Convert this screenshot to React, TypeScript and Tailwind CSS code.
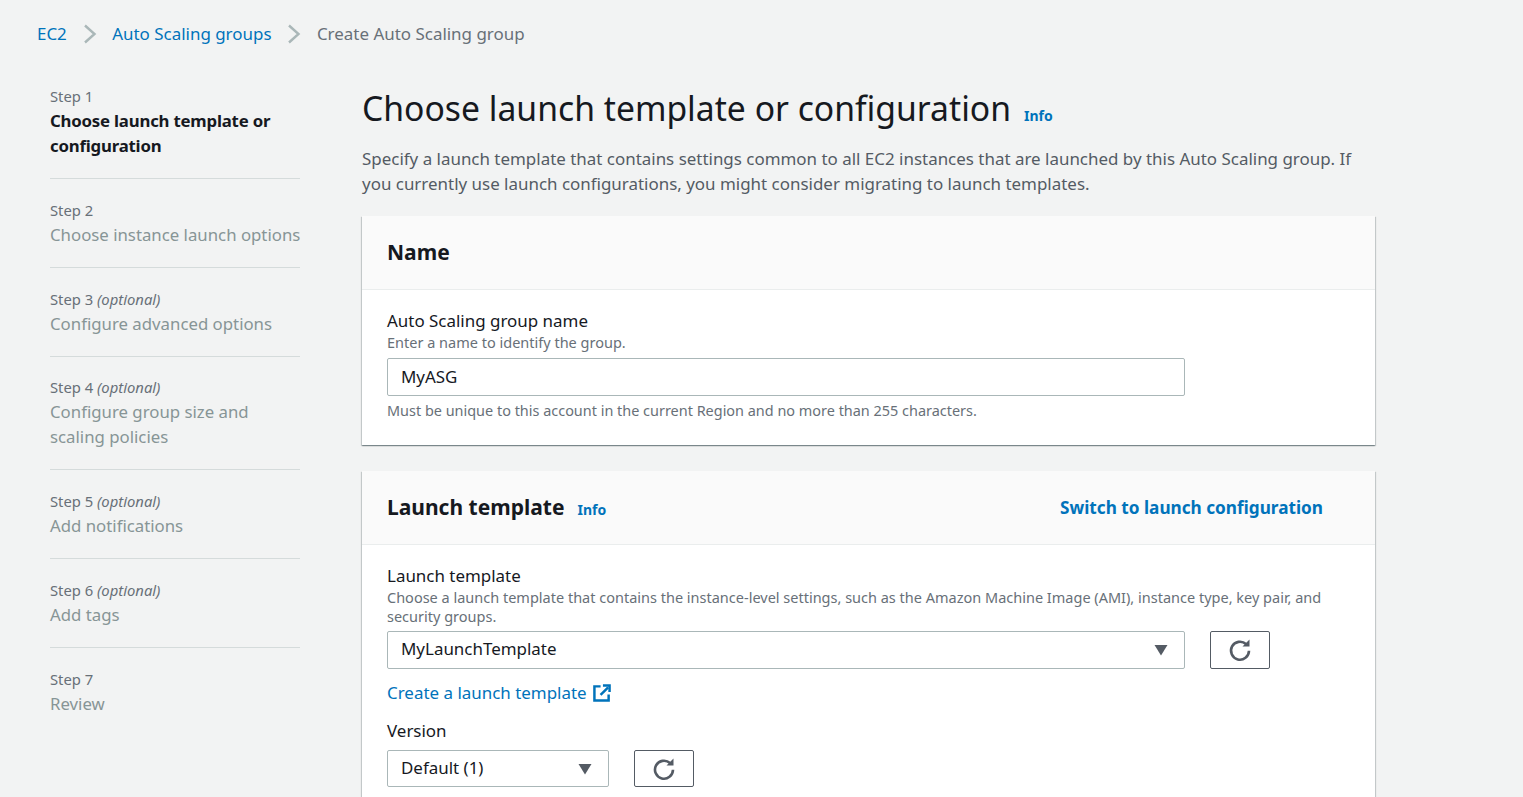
import React from "react";

function Refresh() {
  return (
    <svg width="24" height="24" viewBox="0 0 24 24" fill="none" stroke="#545b64" strokeWidth="2.6">
      <path d="M18 6A9 9 0 1 0 21 12.8" />
      <path d="M21.5 1.5V8.5H14.5Z" fill="#545b64" stroke="none" />
    </svg>
  );
}

function Caret() {
  return (
    <svg width="14" height="12" viewBox="0 0 14 12" fill="#545b64">
      <path d="M0.5 1H13.5L7 11.5Z" />
    </svg>
  );
}

function Chevron() {
  return (
    <svg width="14" height="20" viewBox="0 0 14 20" fill="none" stroke="#aab7b8" strokeWidth="2.4" className="mx-[15.7px]">
      <path d="M2 1.5L11.5 10L2 18.5" />
    </svg>
  );
}

function External() {
  return (
    <svg width="18" height="18" viewBox="0 0 19 19" fill="none" stroke="#0073bb" strokeWidth="2.6" className="ml-[6px]">
      <path d="M8 2.5H1.5V17.5H16.5V11" />
      <path d="M8 11.5L16 3.5" />
      <path d="M10.5 1.5H17.5V8.5" />
    </svg>
  );
}

const steps = [
  { s: "Step 1", o: false, t: "Choose launch template or configuration", active: true },
  { s: "Step 2", o: false, t: "Choose instance launch options", nowrap: true },
  { s: "Step 3", o: true, t: "Configure advanced options", tight: true },
  { s: "Step 4", o: true, t: "Configure group size and scaling policies" },
  { s: "Step 5", o: true, t: "Add notifications" },
  { s: "Step 6", o: true, t: "Add tags" },
  { s: "Step 7", o: false, t: "Review" },
];

function SelectBox({ value, w, h }: { value: string; w: string; h: string }) {
  return (
    <div className={`${w} ${h} flex items-center justify-between bg-white border border-[#aab7b8] rounded-[2px] pl-[13px] pr-[16px] text-[16.95px] text-[#16191f]`}>
      <span className="pb-[2px]">{value}</span>
      <Caret />
    </div>
  );
}

function RefreshBtn({ h }: { h: string }) {
  return (
    <div className={`w-[60px] ${h} flex items-center justify-center border border-[#545b64] rounded-[2px] bg-white`}>
      <Refresh />
    </div>
  );
}

const cardShadow = "bg-white shadow-[0_1px_1px_0_rgba(0,28,36,0.3),1px_1px_1px_0_rgba(0,28,36,0.15),-1px_1px_1px_0_rgba(0,28,36,0.15)]";

export default function App() {
  return (
    <div className="w-[1523px] h-[797px] overflow-hidden bg-[#f2f3f3] font-['Noto_Sans','Open_Sans',sans-serif] text-[#16191f]">
      <nav className="h-[67px] flex items-center pl-[37px] text-[16.95px]">
        <span className="text-[#0073bb]">EC2</span>
        <Chevron />
        <span className="text-[#0073bb]">Auto Scaling groups</span>
        <Chevron />
        <span className="text-[#687078]">Create Auto Scaling group</span>
      </nav>
      <div className="flex">
        <aside className="w-[250px] ml-[50px] mt-[19px] shrink-0">
          {steps.map((st, i) => (
            <div key={st.s} className={i < steps.length - 1 ? `border-b border-[#d5dbdb] pb-[20px] ${st.tight ? "mb-[20px]" : "mb-[21px]"}` : ""}>
              <div className="text-[14.8px] leading-[20px] text-[#687078]">
                {st.s}
                {st.o && <i> (optional)</i>}
              </div>
              <div className={`text-[16.8px] leading-[25px] mt-[2px] ${st.active ? "font-bold text-[#16191f] tracking-[-0.2px]" : "text-[#879596]"} ${st.nowrap ? "whitespace-nowrap" : ""}`}>
                {st.t}
              </div>
            </div>
          ))}
        </aside>
        <main className="ml-[62px] w-[1013px]">
          <div className="flex items-baseline mt-[19px]">
            <h1 className="text-[33.7px] leading-[44px] font-normal">Choose launch template or configuration</h1>
            <a className="ml-[13px] text-[14px] font-bold text-[#0073bb]">Info</a>
          </div>
          <p className="mt-[16px] w-[1000px] text-[16.95px] leading-[25px] text-[#545b64]">
            Specify a launch template that contains settings common to all EC2 instances that are launched by this Auto Scaling group. If you currently use launch configurations, you might consider migrating to launch templates.
          </p>
          <section className={`mt-[20px] ${cardShadow}`}>
            <header className="h-[74px] flex items-center px-[25px] bg-[#fafafa] border-b border-[#eaeded]">
              <h2 className="text-[21px] font-bold">Name</h2>
            </header>
            <div className="px-[25px] pt-[19px] pb-[24px]">
              <div className="text-[16.95px] leading-[24px]">Auto Scaling group name</div>
              <div className="text-[14.5px] leading-[19px] text-[#687078]">Enter a name to identify the group.</div>
              <div className="mt-[6px] w-[798px] h-[38px] flex items-center bg-white border border-[#aab7b8] rounded-[2px] pl-[13px] text-[16.95px]">MyASG</div>
              <div className="mt-[5px] text-[14.45px] leading-[20px] text-[#687078]">Must be unique to this account in the current Region and no more than 255 characters.</div>
            </div>
          </section>
          <section className={`mt-[26px] ${cardShadow}`}>
            <header className="h-[74px] flex items-center justify-between pl-[25px] pr-[52px] bg-[#fafafa] border-b border-[#eaeded]">
              <div className="flex items-baseline">
                <h2 className="text-[21px] font-bold">Launch template</h2>
                <a className="ml-[13px] text-[14px] font-bold text-[#0073bb]">Info</a>
              </div>
              <a className="text-[17.2px] font-bold text-[#0073bb]">Switch to launch configuration</a>
            </header>
            <div className="px-[25px] pt-[19px] pb-[24px]">
              <div className="text-[16.95px] leading-[24px]">Launch template</div>
              <div className="text-[14.5px] leading-[19px] text-[#687078] w-[960px]">Choose a launch template that contains the instance-level settings, such as the Amazon Machine Image (AMI), instance type, key pair, and security groups.</div>
              <div className="mt-[5px] flex gap-[25px]">
                <SelectBox value="MyLaunchTemplate" w="w-[798px]" h="h-[38px]" />
                <RefreshBtn h="h-[38px]" />
              </div>
              <div className="mt-[11px] flex items-center text-[16.95px] leading-[25px] text-[#0073bb]">
                Create a launch template
                <External />
              </div>
              <div className="mt-[13px] text-[16.95px] leading-[25px]">Version</div>
              <div className="mt-[7px] flex gap-[25px]">
                <SelectBox value="Default (1)" w="w-[222px]" h="h-[37px]" />
                <RefreshBtn h="h-[37px]" />
              </div>
            </div>
          </section>
        </main>
      </div>
    </div>
  );
}
